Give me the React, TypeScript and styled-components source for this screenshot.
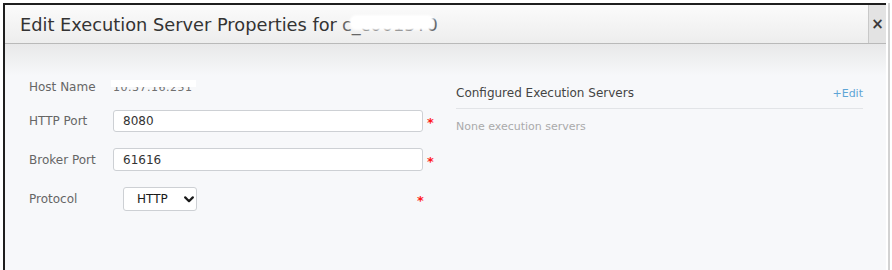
import React from "react";
import styled, { createGlobalStyle } from "styled-components";

const Global = createGlobalStyle`
  html, body { margin: 0; padding: 0; background: #ffffff; }
  body { font-family: "DejaVu Sans", Verdana, sans-serif; }
  #root { width: 892px; height: 270px; overflow: hidden; }
`;

const Frame = styled.div`
  width: 892px;
  height: 270px;
  box-sizing: border-box;
  padding: 3px 0 0 3px;
  display: flex;
  overflow: hidden;
`;

const Modal = styled.div`
  width: 883px;
  height: 267px;
  box-sizing: border-box;
  border-top: 2px solid #1e1e1e;
  border-left: 2px solid #1e1e1e;
  display: flex;
  flex-direction: column;
  background: #f7f8fa;
`;

const RightEdge = styled.div`
  width: 2px;
  margin-left: 2px;
  background: #d2d2d2;
`;

const Header = styled.div`
  height: 38px;
  flex: none;
  display: flex;
  border-bottom: 1px solid #b9b9b9;
  background: linear-gradient(#fbfbfb, #ededed);
`;

const Title = styled.div`
  flex: 1;
  display: flex;
  align-items: center;
  padding-left: 15px;
  font-size: 17.8px;
  color: #333;
  white-space: nowrap;
`;

const Redacted = styled.span`
  position: relative;
  margin-left: 5px;
  color: #666;
  &::after {
    content: "";
    position: absolute;
    left: 8px;
    right: 4px;
    top: 1px;
    bottom: 5px;
    background: #ffffff;
    border-radius: 6px;
    filter: blur(1px);
  }
`;

const Close = styled.div`
  width: 17px;
  flex: none;
  border-left: 1px solid #c8c8c8;
  background: #e3e3e3;
  display: flex;
  align-items: center;
  justify-content: center;
  font-size: 15px;
  font-weight: bold;
  color: #3a3a3a;
`;

const Body = styled.div`
  flex: 1;
  background: linear-gradient(#e8e8e9 0px, #f7f8fa 32px);
  padding: 32px 23px 0 24px;
  display: grid;
  grid-template-columns: 403px 1fr;
  column-gap: 24px;
  align-items: start;
`;

const Form = styled.div`
  display: flex;
  flex-direction: column;
`;

const Row = styled.div<{ $h: number; $gap: number }>`
  display: flex;
  align-items: center;
  height: ${(p) => p.$h}px;
  margin-bottom: ${(p) => p.$gap}px;
`;

const Label = styled.div`
  width: 84px;
  flex: none;
  font-size: 12px;
  color: #666;
  white-space: nowrap;
`;

const HostValue = styled.span`
  position: relative;
  font-size: 11px;
  color: #6f6f6f;
  letter-spacing: 0.5px;
  &::after {
    content: "";
    position: absolute;
    left: -2px;
    right: -4px;
    top: -1px;
    height: 60%;
    background: #ffffff;
    filter: blur(0.6px);
  }
`;

const TextInput = styled.input`
  width: 310px;
  height: 100%;
  flex: none;
  box-sizing: border-box;
  border: 1px solid #cdd0d4;
  border-radius: 3px;
  background: #fff;
  padding: 0 9px;
  font-family: "DejaVu Sans", Verdana, sans-serif;
  font-size: 12px;
  color: #333;
  outline: none;
`;

const Required = styled.span<{ $ml: number }>`
  margin-left: ${(p) => p.$ml}px;
  color: #ff1a1a;
  font-size: 13px;
  font-weight: bold;
  line-height: 1;
  padding-top: 3px;
`;

const SelectCell = styled.div`
  width: 302px;
  height: 100%;
  flex: none;
  display: flex;
  align-items: stretch;
`;

const SelectBox = styled.div`
  margin-left: 10px;
  width: 74px;
  box-sizing: border-box;
  border: 1px solid #cdd0d4;
  border-radius: 3px;
  background: #fff;
  display: flex;
  align-items: center;
  padding-left: 13px;
  gap: 16px;
  font-size: 12px;
  color: #1a1a1a;
`;

const Panel = styled.div`
  margin-top: 5px;
  display: flex;
  flex-direction: column;
`;

const PanelHead = styled.div`
  height: 24px;
  padding-bottom: 3px;
  display: flex;
  align-items: center;
  justify-content: space-between;
  border-bottom: 1px solid #e2e4e7;
`;

const PanelTitle = styled.div`
  font-size: 12px;
  color: #444;
`;

const EditLink = styled.a`
  font-size: 11px;
  color: #5ea5d6;
  text-decoration: none;
`;

const Empty = styled.div`
  margin-top: 10px;
  line-height: 16px;
  font-size: 11px;
  color: #aaa;
`;

function Chevron() {
  return (
    <svg width="10" height="7" viewBox="0 0 10 7" fill="none">
      <path d="M1.2 1.4 L5 5.2 L8.8 1.4" stroke="#1a1a1a" strokeWidth="2.2" strokeLinecap="round" strokeLinejoin="round" />
    </svg>
  );
}

export default function App() {
  return (
    <>
      <Global />
      <Frame>
        <Modal>
          <Header>
            <Title>
              Edit Execution Server Properties for
              <Redacted>c_c0015T0</Redacted>
            </Title>
            <Close>×</Close>
          </Header>
          <Body>
            <Form>
              <Row $h={22} $gap={12}>
                <Label>Host Name</Label>
                <HostValue>10.37.16.251</HostValue>
              </Row>
              <Row $h={22} $gap={16}>
                <Label>HTTP Port</Label>
                <TextInput readOnly value="8080" />
                <Required $ml={4}>*</Required>
              </Row>
              <Row $h={23} $gap={16}>
                <Label>Broker Port</Label>
                <TextInput readOnly value="61616" />
                <Required $ml={4}>*</Required>
              </Row>
              <Row $h={24} $gap={0}>
                <Label>Protocol</Label>
                <SelectCell>
                  <SelectBox>
                    <span>HTTP</span>
                    <Chevron />
                  </SelectBox>
                </SelectCell>
                <Required $ml={2}>*</Required>
              </Row>
            </Form>
            <Panel>
              <PanelHead>
                <PanelTitle>Configured Execution Servers</PanelTitle>
                <EditLink href="#">+Edit</EditLink>
              </PanelHead>
              <Empty>None execution servers</Empty>
            </Panel>
          </Body>
        </Modal>
        <RightEdge />
      </Frame>
    </>
  );
}
